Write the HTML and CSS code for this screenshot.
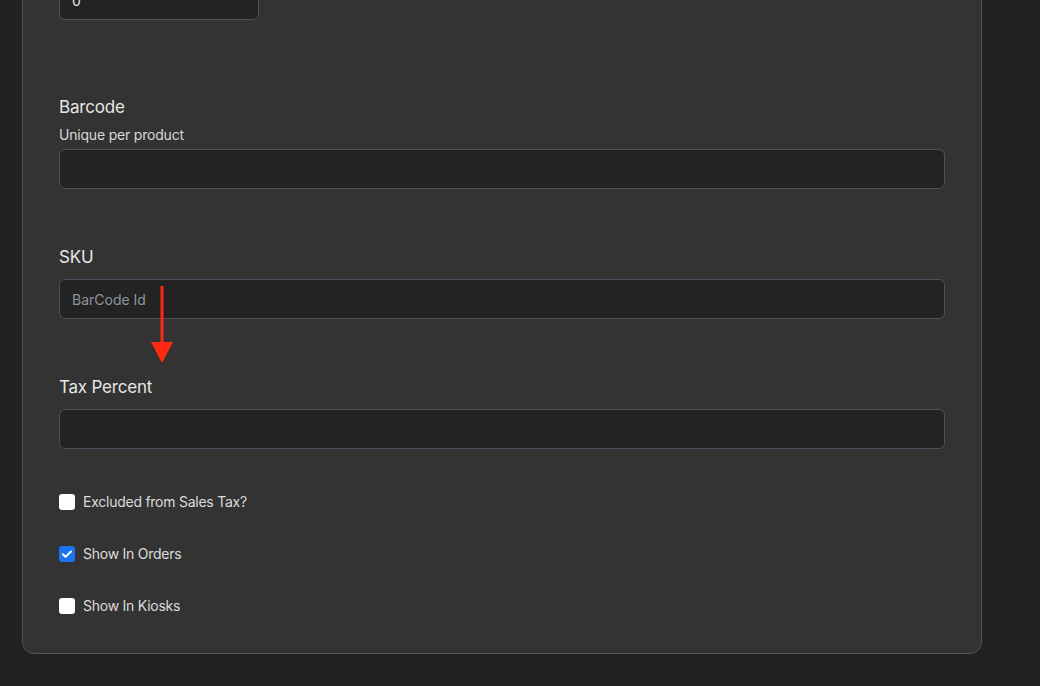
FILE: index.html
```html
<!DOCTYPE html>
<html lang="en">

<head>
    <meta charset="UTF-8">
    <meta name="viewport" content="width=device-width, initial-scale=1.0">
    <title>Edit Product</title>
    <link rel="stylesheet" href="styles.css">
</head>

<body>
    <div class="page">
        <form class="card">
            <div class="field field-first">
                <input class="input input-short" type="text" value="0">
            </div>

            <div class="field">
                <label class="label">Barcode</label>
                <div class="hint">Unique per product</div>
                <input class="input" type="text">
            </div>

            <div class="field">
                <label class="label label-gap">SKU</label>
                <input class="input" type="text" placeholder="BarCode Id">
            </div>

            <div class="field field-last">
                <label class="label label-gap">Tax Percent</label>
                <input class="input" type="text">
            </div>

            <div class="checks">
                <label class="check">
                    <span class="box"></span>
                    <span>Excluded from Sales Tax?</span>
                </label>
                <label class="check">
                    <span class="box checked">
                        <svg viewBox="0 0 16 16" width="16" height="16">
                            <path d="M4 8.3l2.6 2.6L12 5.5" fill="none" stroke="#fff" stroke-width="2" stroke-linecap="round" stroke-linejoin="round"/>
                        </svg>
                    </span>
                    <span>Show In Orders</span>
                </label>
                <label class="check">
                    <span class="box"></span>
                    <span>Show In Kiosks</span>
                </label>
            </div>

            <!-- pointer drawn over the form -->
            <svg class="pointer" width="30" height="90" viewBox="0 0 30 90">
                <line x1="15" y1="0" x2="15" y2="60" stroke="#ff2a10" stroke-width="3"/>
                <polygon points="4,56 26,56 15,77" fill="#ff2a10"/>
            </svg>
        </form>
    </div>
</body>

</html>
```

FILE: styles.css
```css
* {
    box-sizing: border-box;
}

body {
    margin: 0;
    background-color: #222222;
    font-family: Inter, "Noto Sans", sans-serif;
    color: #e4e4e4;
    overflow: hidden;
}

.page {
    padding: 0 58px 32px 22px;
}

.card {
    position: relative;
    margin-top: -57px;
    padding: 36px 36px 37px;
    background-color: #333333;
    border: 1px solid #4d5562;
    border-radius: 12px;
}

.field {
    margin-bottom: 56px;
}

.field-first {
    margin-bottom: 75px;
}

.field-last {
    margin-bottom: 43px;
}

.label {
    display: block;
    font-size: 17px;
    line-height: 24px;
    letter-spacing: -0.2px;
    color: #e6e6e6;
}

.label-gap {
    margin-bottom: 10px;
}

.hint {
    font-size: 14px;
    line-height: 20px;
    letter-spacing: -0.2px;
    margin: 6px 0 4px;
    color: #d8d8d8;
}

.input {
    display: block;
    width: 100%;
    height: 40px;
    padding: 0 12px;
    background-color: #232323;
    border: 1px solid #4b5361;
    border-radius: 6px;
    color: #e4e4e4;
    font-family: inherit;
    font-size: 14px;
    outline: none;
}

.input-short {
    width: 200px;
}

.input::placeholder {
    color: #8f949b;
}

.checks {
    display: flex;
    flex-direction: column;
    gap: 32px;
}

.check {
    display: flex;
    align-items: center;
    gap: 8px;
    font-size: 14px;
    line-height: 20px;
    letter-spacing: -0.25px;
    color: #dcdcdc;
}

.box {
    width: 16px;
    height: 16px;
    border-radius: 3px;
    background-color: #ffffff;
    display: flex;
}

.box.checked {
    background-color: #1a73f0;
}

.pointer {
    position: absolute;
    left: 124px;
    top: 342px;
}
```
